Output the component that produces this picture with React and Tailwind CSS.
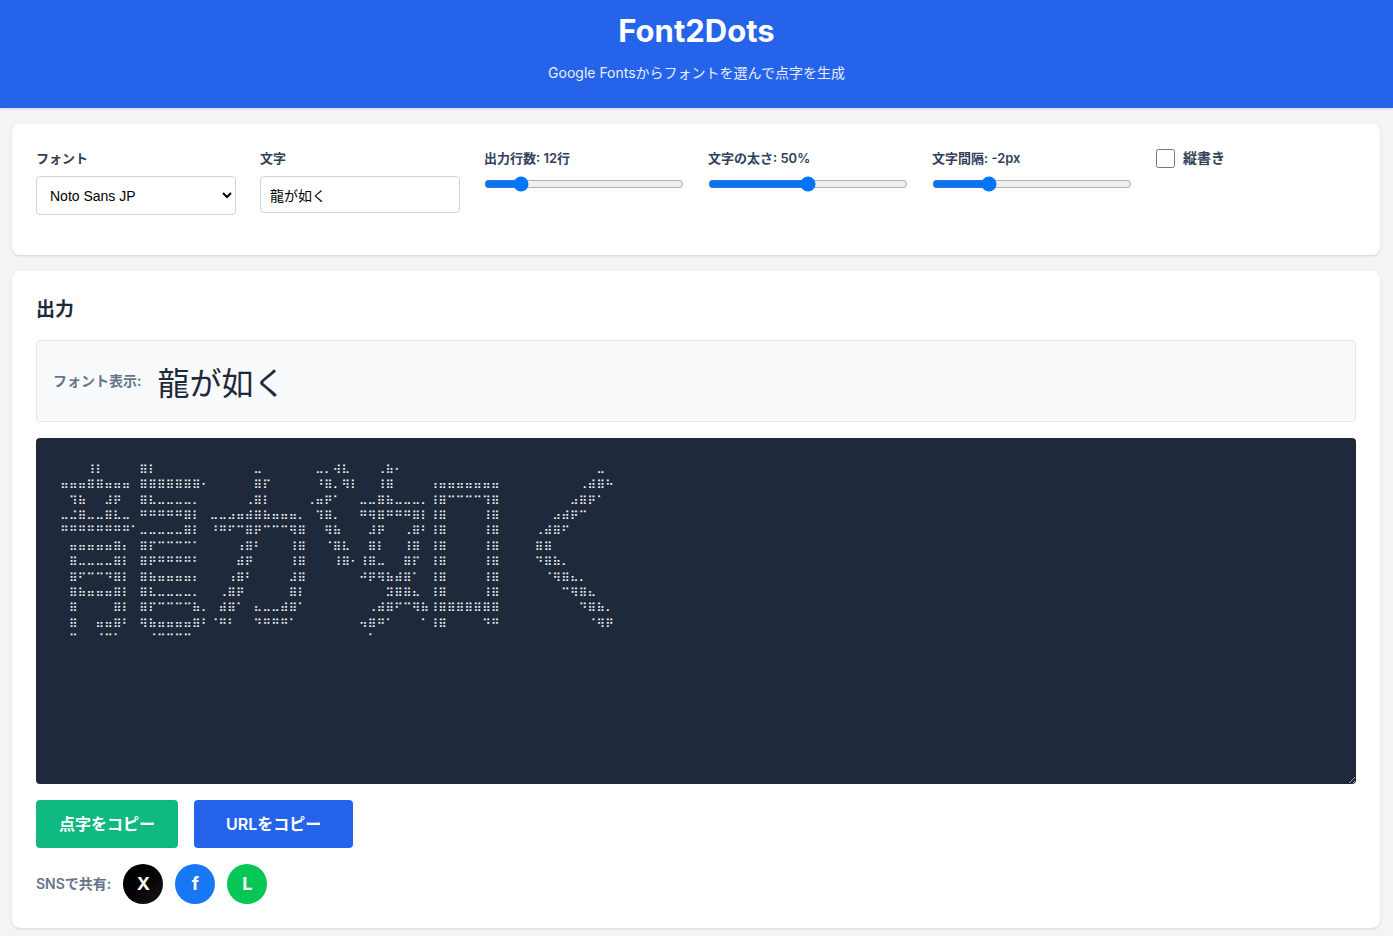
import React, { useState } from "react";

// each row is a list of [column, cells] runs, the gaps are blank braille cells
const ROWS = [
  [[3, "⠸⠇"], [9, "⠿⠇"], [22, "⠤"], [29, "⠤⠄⠺⠧"], [36, "⠠⠷⠂"], [61, "⠤"]],
  [[0, "⠶⠶⠶⠿⠿⠶⠶⠶"], [9, "⠿⠿⠿⠿⠿⠿⠿⠂"], [22, "⠿⠏"], [29, "⠘⠿⠄⠻⠇"], [36, "⠸⠿"], [42, "⠰⠶⠶⠶⠶⠶⠶⠶"], [59, "⠠⠾⠿⠓"]],
  [[1, "⠹⠷"], [5, "⠼⠟"], [9, "⠿⠧⠤⠤⠤⠤⠄"], [21, "⠠⠿⠇"], [28, "⠠⠶⠟⠁"], [34, "⠤⠤⠿⠷⠤⠤⠤⠄⠸⠿⠉⠉⠉⠉⠹⠿"], [58, "⠴⠿⠟⠁"]],
  [[0, "⠤⠬⠿⠤⠤⠿⠧⠤"], [9, "⠛⠛⠛⠛⠛⠿⠇"], [17, "⠤⠤⠴⠶⠾⠿⠷⠶⠶⠶⠄"], [29, "⠹⠿⠄"], [34, "⠛⠻⠿⠛⠛⠛⠿⠇⠸⠿"], [48, "⠸⠿"], [56, "⠴⠾⠟⠉"]],
  [[0, "⠛⠛⠛⠛⠛⠛⠛⠛⠁⠤⠤⠤⠤⠤⠿⠇"], [17, "⠘⠛⠋⠉⠿⠟⠉⠉⠉⠻⠿"], [30, "⠻⠷"], [35, "⠼⠟"], [39, "⠠⠿⠃⠸⠿"], [48, "⠸⠿"], [54, "⠠⠾⠿⠋"]],
  [[1, "⠶⠶⠶⠶⠶⠿⠆"], [9, "⠿⠏⠉⠉⠉⠉⠁"], [20, "⠰⠿⠃"], [26, "⠸⠿"], [30, "⠈⠿⠧"], [35, "⠿⠇"], [39, "⠸⠿"], [42, "⠸⠿"], [48, "⠸⠿"], [54, "⠿⠿"]],
  [[1, "⠿⠤⠤⠤⠤⠿⠇"], [9, "⠿⠟⠛⠛⠛⠛⠃"], [20, "⠾⠟"], [26, "⠸⠿"], [31, "⠸⠿⠂⠸⠿⠤"], [39, "⠿⠏"], [42, "⠸⠿"], [48, "⠸⠿"], [54, "⠙⠿⠷⠄"]],
  [[1, "⠿⠋⠉⠉⠙⠿⠇"], [9, "⠿⠷⠶⠶⠶⠶⠆"], [19, "⠰⠿⠃"], [26, "⠼⠿"], [34, "⠚⠟⠻⠷⠾⠿⠁"], [42, "⠸⠿"], [48, "⠸⠿"], [55, "⠈⠻⠿⠦⠄"]],
  [[1, "⠿⠷⠶⠶⠶⠿⠇"], [9, "⠿⠧⠤⠤⠤⠤⠄"], [18, "⠠⠿⠟"], [26, "⠿⠇"], [37, "⠽⠿⠿⠦"], [42, "⠸⠿"], [48, "⠸⠿"], [57, "⠉⠻⠿⠦"]],
  [[1, "⠿"], [6, "⠿⠇"], [9, "⠿⠏⠉⠉⠉⠉⠷⠄"], [18, "⠾⠿⠁"], [22, "⠦⠤⠤⠾⠿⠁"], [35, "⠠⠾⠿⠋⠉⠻⠷⠸⠿⠿⠿⠿⠿⠿⠿"], [59, "⠙⠿⠷⠄"]],
  [[1, "⠿"], [4, "⠶⠶⠿⠃"], [9, "⠻⠷⠶⠶⠶⠶⠿⠃⠈⠛⠃"], [22, "⠙⠛⠛⠛⠁"], [34, "⠲⠿⠛⠁"], [41, "⠁⠸⠿"], [48, "⠙⠛"], [60, "⠈⠻⠟"]],
  [[1, "⠉"], [4, "⠈⠉⠁"], [10, "⠈⠉⠉⠉⠉"], [35, "⠁"]],
];

const braille = ROWS.map((runs) =>
  runs.reduce((line, [col, cells]) => line.padEnd(col, "\u2800") + cells, "")
).join("\n");

function Slider({ id, label, value, min, max, onChange }) {
  return (
    <div className="flex flex-col">
      <label htmlFor={id} className="mb-2 text-[13px] leading-5 font-semibold text-slate-700">
        {label}
      </label>
      <input
        id={id}
        type="range"
        min={min}
        max={max}
        value={value}
        onChange={(e) => onChange(Number(e.target.value))}
        className="h-4"
      />
    </div>
  );
}

export default function App() {
  const [font, setFont] = useState("Noto Sans JP");
  const [text, setText] = useState("龍が如く");
  const [lines, setLines] = useState(12);
  const [weight, setWeight] = useState(50);
  const [spacing, setSpacing] = useState(-2);
  const [vertical, setVertical] = useState(false);

  return (
    <div className="min-h-screen bg-[#f4f4f4] pb-2 font-['Inter','Noto_Sans_CJK_JP',sans-serif] text-[#1e293b]">
      <header className="bg-[#2563eb] px-4 pt-2 pb-6 text-center text-white shadow">
        <h1 className="text-[31px] leading-[46px] font-bold">Font2Dots</h1>
        <p className="mt-2 text-sm leading-[22px] opacity-90">
          Google Fontsからフォントを選んで点字を生成
        </p>
      </header>

      <main className="flex flex-col gap-4 pt-4 pr-[13px] pl-3">
        <section className="grid grid-cols-2 gap-6 rounded-lg bg-white px-6 pt-6 pb-10 shadow md:grid-cols-3 lg:grid-cols-6">
          <div className="flex flex-col">
            <label htmlFor="font" className="mb-2 text-[13px] leading-5 font-semibold text-[#334155]">
              フォント
            </label>
            <select
              id="font"
              value={font}
              onChange={(e) => setFont(e.target.value)}
              className="h-[39px] rounded border border-[#cbd5e1] bg-white px-[9px] font-['Liberation_Sans',sans-serif] text-sm text-black"
            >
              <option>Noto Sans JP</option>
              <option>Noto Serif JP</option>
            </select>
          </div>
          <div className="flex flex-col">
            <label htmlFor="text" className="mb-2 text-[13px] leading-5 font-semibold text-[#334155]">
              文字
            </label>
            <input
              id="text"
              type="text"
              value={text}
              onChange={(e) => setText(e.target.value)}
              className="h-[37px] rounded border border-[#cbd5e1] px-[9px] text-sm text-black"
            />
          </div>
          <Slider id="lines" label={`出力行数: ${lines}行`} value={lines} min={5} max={50} onChange={setLines} />
          <Slider id="weight" label={`文字の太さ: ${weight}%`} value={weight} min={0} max={100} onChange={setWeight} />
          <Slider id="spacing" label={`文字間隔: ${spacing}px`} value={spacing} min={-10} max={20} onChange={setSpacing} />
          <label className="flex items-center gap-2 self-start text-sm leading-5 font-semibold text-[#334155]">
            <input
              type="checkbox"
              checked={vertical}
              onChange={(e) => setVertical(e.target.checked)}
              className="size-[19px]"
            />
            縦書き
          </label>
        </section>

        <section className="rounded-lg bg-white p-6 shadow">
          <h2 className="mb-4 text-[19px] leading-[29px] font-bold">出力</h2>

          <div className="mb-4 flex h-[82px] items-center gap-4 rounded border border-[#e2e8f0] bg-[#f8fafc] px-4">
            <span className="text-sm font-semibold text-[#64748b]">フォント表示:</span>
            <span className="font-['Noto_Sans_CJK_JP',sans-serif] text-[32px]">{text}</span>
          </div>

          <textarea
            readOnly
            aria-label="出力"
            value={braille}
            className="block h-[346px] w-full resize-y rounded bg-[#1e293b] px-6 pt-[25px] pb-6 font-['DejaVu_Sans',sans-serif] text-xs leading-[1.28] whitespace-pre text-[#f1f5f9]"
          />

          <div className="mt-4 flex gap-4">
            <button className="h-12 rounded bg-[#10b981] px-[23px] font-semibold text-white hover:bg-[#059669]">
              点字をコピー
            </button>
            <button className="h-12 rounded bg-[#2563eb] px-8 font-semibold text-white hover:bg-[#1d4ed8]">
              URLをコピー
            </button>
          </div>

          <div className="mt-4 flex items-center gap-3">
            <span className="text-sm font-semibold text-[#64748b]">SNSで共有:</span>
            <a href="#x" className="flex size-10 items-center justify-center rounded-full bg-linear-to-br from-black to-[#1a1a1a] text-lg font-bold text-white">
              X
            </a>
            <a href="#facebook" className="flex size-10 items-center justify-center rounded-full bg-[#1877f2] text-lg font-bold text-white">
              f
            </a>
            <a href="#line" className="flex size-10 items-center justify-center rounded-full bg-[#06c755] text-lg font-bold text-white">
              L
            </a>
          </div>
        </section>
      </main>
    </div>
  );
}
